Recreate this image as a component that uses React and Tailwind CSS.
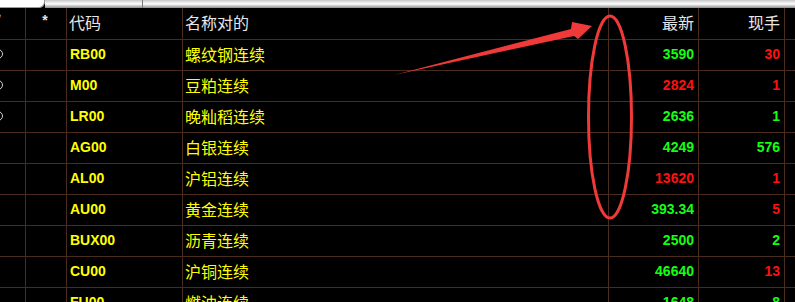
import React from "react";

const rows = [
  { code: "RB00", name: "螺纹钢连续", last: "3590", lastUp: true, vol: "30", volUp: false, mark: true },
  { code: "M00", name: "豆粕连续", last: "2824", lastUp: false, vol: "1", volUp: false, mark: true },
  { code: "LR00", name: "晚籼稻连续", last: "2636", lastUp: true, vol: "1", volUp: true, mark: true },
  { code: "AG00", name: "白银连续", last: "4249", lastUp: true, vol: "576", volUp: true },
  { code: "AL00", name: "沪铝连续", last: "13620", lastUp: false, vol: "1", volUp: false },
  { code: "AU00", name: "黄金连续", last: "393.34", lastUp: true, vol: "5", volUp: false },
  { code: "BUX00", name: "沥青连续", last: "2500", lastUp: true, vol: "2", volUp: true },
  { code: "CU00", name: "沪铜连续", last: "46640", lastUp: true, vol: "13", volUp: false },
  { code: "FU00", name: "燃油连续", last: "1648", lastUp: true, vol: "8", volUp: true },
];

const cjk = { fontFamily: '"Noto Sans CJK SC", "Noto Sans", sans-serif' };
const latin = { fontFamily: '"Liberation Sans", Arial, sans-serif' };

const grid = "grid grid-cols-[26px_41px_116px_426px_90px_86px_1fr]";
const cell = "border-r border-[#4a2b1d] flex items-center overflow-hidden";

function Annotation() {
  return (
    <svg className="absolute left-0 top-0 pointer-events-none" width="795" height="302">
      <polygon points="394,75 571,29 572,22 592,26 578,39 574,36" fill="#f03a3a" />
      <ellipse cx="610" cy="117" rx="21.5" ry="101" fill="none" stroke="#f03a3a" strokeWidth="3" />
    </svg>
  );
}

export default function App() {
  return (
    <div className="relative w-[795px] h-[302px] overflow-hidden bg-black">
      {/* top tab strip */}
      <div className="flex h-[8px]">
        <div className="w-[45px] bg-white rounded-br-[6px] border-r border-b border-[#9a9a9a]" />
        <div className="w-[98px] bg-gradient-to-b from-[#c8c8c8] via-white to-[#8c8c8c] border-r border-[#7a7a7a]" />
        <div className="flex-1 bg-gradient-to-b from-[#c8c8c8] via-white to-[#8c8c8c]" />
      </div>

      {/* header */}
      <div className={`${grid} h-[32px] border-b border-[#4a2b1d] text-[#e6e6e6] text-[16px]`} style={cjk}>
        <div className={cell}>
          <span className="-ml-[2px] text-[12px] leading-none -mt-[10px] text-[#e6e6e6]">′</span>
        </div>
        <div className={`${cell} justify-center`} style={latin}>
          <span className="text-[14px] font-bold -mt-[6px] -ml-[2px]">*</span>
        </div>
        <div className={`${cell} pl-[2px] pb-[4px]`}>代码</div>
        <div className={`${cell} pl-[2px] pb-[4px]`}>名称对的</div>
        <div className={`${cell} justify-end pr-[4px] pb-[4px]`}>最新</div>
        <div className={`${cell} justify-end pr-[4px] pb-[4px]`}>现手</div>
        <div />
      </div>

      {rows.map((r) => (
        <div key={r.code} className={`${grid} h-[31px] border-b border-[#4a2b1d]`}>
          <div className={cell}>
            {r.mark && (
              <span className="-ml-[7px] mb-[2px] w-[10px] h-[10px] rounded-full border border-[#d0d0d0]" />
            )}
          </div>
          <div className={cell} />
          <div className={`${cell} pl-[3px] pb-[2px] text-[14px] font-bold text-[#ffff00]`} style={latin}>
            {r.code}
          </div>
          <div className={`${cell} pl-[2px] pb-[3px] text-[16px] text-[#ffff00]`} style={cjk}>
            {r.name}
          </div>
          <div
            className={`${cell} justify-end pr-[4px] pb-[2px] text-[14px] font-bold ${r.lastUp ? "text-[#14ff14]" : "text-[#ff1010]"}`}
            style={latin}
          >
            {r.last}
          </div>
          <div
            className={`${cell} justify-end pr-[4px] pb-[2px] text-[14px] font-bold ${r.volUp ? "text-[#14ff14]" : "text-[#ff1010]"}`}
            style={latin}
          >
            {r.vol}
          </div>
          <div />
        </div>
      ))}

      <Annotation />
    </div>
  );
}
